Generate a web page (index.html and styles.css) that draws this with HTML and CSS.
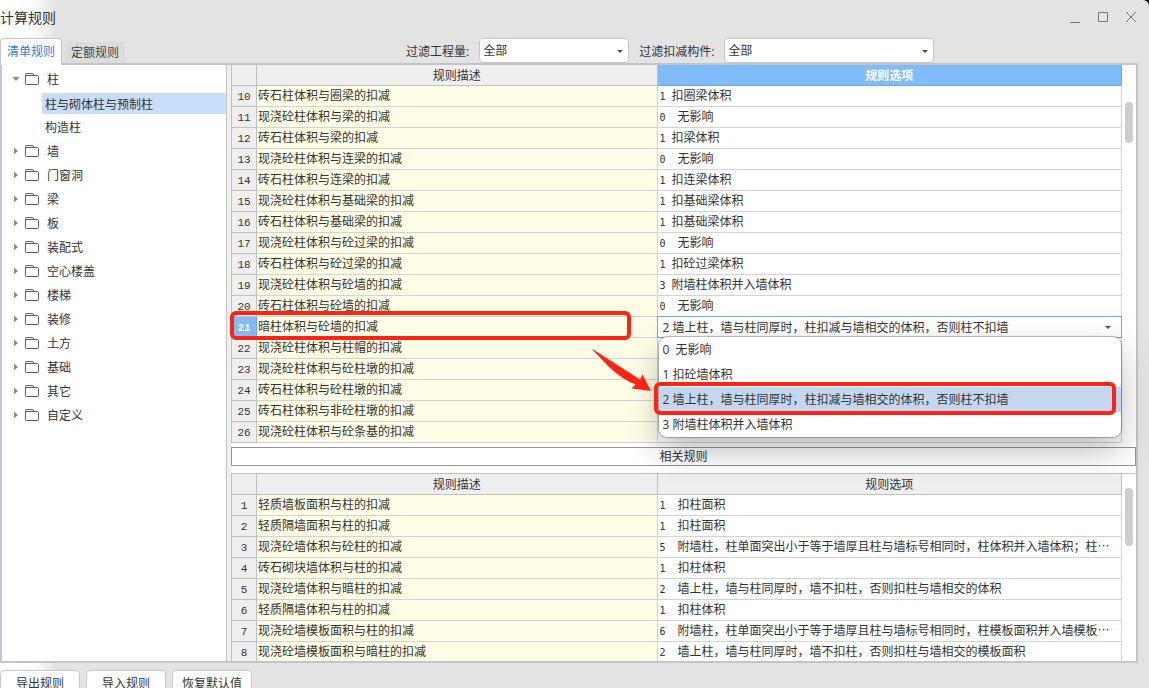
FILE: index.html
```html
<!DOCTYPE html>
<html lang="zh-CN">
<head>
<meta charset="utf-8">
<meta name="viewport" content="width=device-width, initial-scale=1">
<title>计算规则</title>
<link rel="stylesheet" href="styles.css">
</head>
<body>
<svg class="defs" aria-hidden="true">
  <symbol id="folder" viewBox="0 0 14 12"><path d="M1.5 11.5h11a1 1 0 0 0 1-1v-7a1 1 0 0 0-1-1H9L8 .5H1.5a1 1 0 0 0-1 1v9a1 1 0 0 0 1 1zM.5 2.5H9" fill="none" stroke="#555d6e"/></symbol>
  <symbol id="right" viewBox="0 0 6 8"><path d="M1 0.5v7L5 4z" fill="#8a8a8a"/></symbol>
  <symbol id="down" viewBox="0 0 8 6"><path d="M.5 1h7L4 5z" fill="#8a8a8a"/></symbol>
</svg>
<main class="window">
  <header class="titlebar">
    <h1>计算规则</h1>
    <div class="controls">
      <button type="button" aria-label="最小化"><svg width="12" height="12"><path d="M1 10.500h10" /></svg></button>
      <button type="button" aria-label="最大化"><svg width="12" height="12"><path d="M1.500 .500h9v9h-9z"/></svg></button>
      <button type="button" aria-label="关闭"><svg width="12" height="12"><path d="M1 0l10 10M11 0L1 10"/></svg></button>
    </div>
  </header>
  <div class="toolbar">
    <div class="tabs" role="tablist">
      <button type="button" class="tab active" role="tab" aria-selected="true">清单规则</button>
      <button type="button" class="tab" role="tab" aria-selected="false">定额规则</button>
    </div>
    <div class="filters">
      <label for="quantity">过滤工程量:</label>
      <span class="combo quantity"><select id="quantity"><option>全部</option></select></span>
      <label for="component">过滤扣减构件:</label>
      <span class="combo component"><select id="component"><option>全部</option></select></span>
    </div>
  </div>
  <div class="frame">
    <nav class="tree" aria-label="构件">
      <ul>
        <li class="node"><svg class="twist"><use href="#down"/></svg><svg class="folder"><use href="#folder"/></svg><span>柱</span></li>
        <li class="leaf selected">柱与砌体柱与预制柱</li>
        <li class="leaf">构造柱</li>
        <li class="node"><svg class="twist"><use href="#right"/></svg><svg class="folder"><use href="#folder"/></svg><span>墙</span></li>
        <li class="node"><svg class="twist"><use href="#right"/></svg><svg class="folder"><use href="#folder"/></svg><span>门窗洞</span></li>
        <li class="node"><svg class="twist"><use href="#right"/></svg><svg class="folder"><use href="#folder"/></svg><span>梁</span></li>
        <li class="node"><svg class="twist"><use href="#right"/></svg><svg class="folder"><use href="#folder"/></svg><span>板</span></li>
        <li class="node"><svg class="twist"><use href="#right"/></svg><svg class="folder"><use href="#folder"/></svg><span>装配式</span></li>
        <li class="node"><svg class="twist"><use href="#right"/></svg><svg class="folder"><use href="#folder"/></svg><span>空心楼盖</span></li>
        <li class="node"><svg class="twist"><use href="#right"/></svg><svg class="folder"><use href="#folder"/></svg><span>楼梯</span></li>
        <li class="node"><svg class="twist"><use href="#right"/></svg><svg class="folder"><use href="#folder"/></svg><span>装修</span></li>
        <li class="node"><svg class="twist"><use href="#right"/></svg><svg class="folder"><use href="#folder"/></svg><span>土方</span></li>
        <li class="node"><svg class="twist"><use href="#right"/></svg><svg class="folder"><use href="#folder"/></svg><span>基础</span></li>
        <li class="node"><svg class="twist"><use href="#right"/></svg><svg class="folder"><use href="#folder"/></svg><span>其它</span></li>
        <li class="node"><svg class="twist"><use href="#right"/></svg><svg class="folder"><use href="#folder"/></svg><span>自定义</span></li>
      </ul>
    </nav>
    <div class="content">
      <section class="pane upper">
        <table>
          <colgroup><col class="c-no"><col class="c-desc"><col></colgroup>
          <thead><tr><th></th><th>规则描述</th><th class="current">规则选项</th></tr></thead>
          <tbody>
            <tr><th>10</th><td>砖石柱体积与圈梁的扣减</td><td><i>1 </i>扣圈梁体积</td></tr>
            <tr><th>11</th><td>现浇砼柱体积与梁的扣减</td><td><i>0  </i>无影响</td></tr>
            <tr><th>12</th><td>砖石柱体积与梁的扣减</td><td><i>1 </i>扣梁体积</td></tr>
            <tr><th>13</th><td>现浇砼柱体积与连梁的扣减</td><td><i>0  </i>无影响</td></tr>
            <tr><th>14</th><td>砖石柱体积与连梁的扣减</td><td><i>1 </i>扣连梁体积</td></tr>
            <tr><th>15</th><td>现浇砼柱体积与基础梁的扣减</td><td><i>1 </i>扣基础梁体积</td></tr>
            <tr><th>16</th><td>砖石柱体积与基础梁的扣减</td><td><i>1 </i>扣基础梁体积</td></tr>
            <tr><th>17</th><td>现浇砼柱体积与砼过梁的扣减</td><td><i>0  </i>无影响</td></tr>
            <tr><th>18</th><td>砖石柱体积与砼过梁的扣减</td><td><i>1 </i>扣砼过梁体积</td></tr>
            <tr><th>19</th><td>现浇砼柱体积与砼墙的扣减</td><td><i>3 </i>附墙柱体积并入墙体积</td></tr>
            <tr><th>20</th><td>砖石柱体积与砼墙的扣减</td><td><i>0  </i>无影响</td></tr>
            <tr class="editing">
              <th class="current">21</th>
              <td class="marked">暗柱体积与砼墙的扣减<span class="mark row-mark"></span>
                <svg class="arrow" viewBox="0 0 60 43" aria-hidden="true"><path d="M1 .300Q2 0 3 1L49 30.500 51.500 25.500 60 42 40.500 39.500 44.500 35.500Q32 31 18 18z" fill="#ff2313"/></svg></td>
              <td class="editor">
                <span class="combo cell"><select aria-label="规则选项"><option>2 墙上柱，墙与柱同厚时，柱扣减与墙相交的体积，否则柱不扣墙</option></select></span>
                <ul class="popup" role="listbox" aria-label="规则选项">
                  <li role="option">0  无影响</li>
                  <li role="option">1 扣砼墙体积</li>
                  <li role="option" class="chosen" aria-selected="true">2 墙上柱，墙与柱同厚时，柱扣减与墙相交的体积，否则柱不扣墙<span class="mark option-mark"></span></li>
                  <li role="option">3 附墙柱体积并入墙体积</li>
                </ul>
              </td>
            </tr>
            <tr><th>22</th><td>现浇砼柱体积与柱帽的扣减</td><td></td></tr>
            <tr><th>23</th><td>现浇砼柱体积与砼柱墩的扣减</td><td></td></tr>
            <tr><th>24</th><td>砖石柱体积与砼柱墩的扣减</td><td></td></tr>
            <tr><th>25</th><td>砖石柱体积与非砼柱墩的扣减</td><td></td></tr>
            <tr><th>26</th><td>现浇砼柱体积与砼条基的扣减</td><td></td></tr>
          </tbody>
        </table>
        <div class="scroll"><div class="thumb"></div></div>
      </section>
      <h2 class="related">相关规则</h2>
      <section class="pane lower">
        <table>
          <colgroup><col class="c-no"><col class="c-desc"><col></colgroup>
          <thead><tr><th></th><th>规则描述</th><th>规则选项</th></tr></thead>
          <tbody>
            <tr><th>1</th><td>轻质墙板面积与柱的扣减</td><td><i>1  </i>扣柱面积</td></tr>
            <tr><th>2</th><td>轻质隔墙面积与柱的扣减</td><td><i>1  </i>扣柱面积</td></tr>
            <tr><th>3</th><td>现浇砼墙体积与砼柱的扣减</td><td><i>5  </i>附墙柱，柱单面突出小于等于墙厚且柱与墙标号相同时，柱体积并入墙体积；柱…</td></tr>
            <tr><th>4</th><td>砖石砌块墙体积与柱的扣减</td><td><i>1  </i>扣柱体积</td></tr>
            <tr><th>5</th><td>现浇砼墙体积与暗柱的扣减</td><td><i>2  </i>墙上柱，墙与柱同厚时，墙不扣柱，否则扣柱与墙相交的体积</td></tr>
            <tr><th>6</th><td>轻质隔墙体积与柱的扣减</td><td><i>1  </i>扣柱体积</td></tr>
            <tr><th>7</th><td>现浇砼墙模板面积与柱的扣减</td><td><i>6  </i>附墙柱，柱单面突出小于等于墙厚且柱与墙标号相同时，柱模板面积并入墙模板…</td></tr>
            <tr><th>8</th><td>现浇砼墙模板面积与暗柱的扣减</td><td><i>2  </i>墙上柱，墙与柱同厚时，墙不扣柱，否则扣柱与墙相交的模板面积</td></tr>
          </tbody>
        </table>
        <div class="scroll"><div class="thumb"></div></div>
      </section>
    </div>
  </div>
  <footer class="actions">
    <button type="button">导出规则</button>
    <button type="button">导入规则</button>
    <button type="button">恢复默认值</button>
  </footer>
</main>
</body>
</html>
```

FILE: styles.css
```css
* { box-sizing: border-box; }
html { background: #000; }
body {
  margin: 0;
  height: 100vh;
  overflow: hidden;
  color: #333;
  font: 12px/20px "Open Sans", "Noto Sans CJK SC", sans-serif;
}
button, select { font: inherit; color: inherit; margin: 0; }
ul { list-style: none; margin: 0; padding: 0; }
.defs { display: none; }

.window {
  min-height: 100vh;
  border-top-right-radius: 6px;
  background: linear-gradient(90deg, #fff 0, #fcfcfc 34px, #e3e3e3 56px);
}
.titlebar {
  display: flex;
  justify-content: space-between;
  align-items: center;
  height: 38px;
  padding: 0 10px 2px 0;
}
.titlebar h1 { margin: 0; font-size: 14px; font-weight: 400; }
.controls { display: flex; gap: 12px; }
.controls button { display: flex; padding: 2px; border: 0; background: none; }
.controls svg { fill: none; stroke: #777; }

.toolbar { display: flex; height: 25px; align-items: flex-end; }
.tabs { display: flex; align-items: flex-end; gap: 3px; }
.tab {
  width: 60px;
  height: 21px;
  padding: 0;
  border: 0;
  border-radius: 3px 3px 0 0;
  background: #dcdcdc;
  color: #444;
}
.tab.active {
  position: relative;
  z-index: 1;
  width: 62px;
  height: 27px;
  margin-bottom: -2px;
  border: 1px solid #c4c4c4;
  border-bottom: 0;
  border-radius: 4px 4px 0 0;
  background: #fff;
  color: #2b7de0;
}
.filters { display: flex; align-items: center; margin-left: 281px; }
.filters label { padding-top: 2px; }
.combo { position: relative; display: block; }
.combo::after {
  content: "";
  position: absolute;
  right: 6px;
  top: 50%;
  margin-top: -1px;
  border: 3px solid transparent;
  border-top-color: #4a4f5c;
  border-bottom: 0;
  pointer-events: none;
}
.combo select {
  appearance: none;
  display: block;
  width: 100%;
  height: 25px;
  padding: 1px 16px 0 3px;
  border: 1px solid #c8c8c8;
  border-radius: 4px;
  background: #fff;
}
.quantity { width: 150px; margin: 0 10px; }
.component { width: 210px; margin-left: 10px; }

.frame {
  display: flex;
  margin-right: 11px;
  border: 2px solid #c4c4c6;
  border-left-color: #c5c8ce;
  background: #fff;
}
.tree { flex: none; width: 225px; padding-top: 2px; border-right: 1px solid #c4c4c4; }
.tree li { display: flex; align-items: center; height: 24px; }
.node { padding-left: 10px; }
.node span { padding-top: 2px; }
.twist { width: 8px; height: 8px; }
.folder { width: 14px; height: 12px; margin: 0 8px 0 5px; }
.tree .leaf { margin-left: 40px; padding: 2px 0 0 3px; }
.tree .selected { height: 21px; margin-top: 2px; margin-bottom: 1px; background: #c9dff9; }

.content { flex: 1; min-width: 0; border-left: 4px solid #efefef; }
.pane { display: flex; }
.upper { position: relative; z-index: 1; }
.lower { overflow: hidden; border-top: 1px solid #c0c0c0; }
.lower table { margin-bottom: -2px; }
table {
  flex: 1;
  min-width: 0;
  width: 0;
  table-layout: fixed;
  border-collapse: separate;
  border-spacing: 0;
  border-left: 1px solid #c0c0c0;
}
.c-no { width: 25px; }
.c-desc { width: 45%; }
th, td {
  height: 21px;
  padding: 0 2px;
  border-right: 1px solid #d3d3d3;
  border-bottom: 1px solid #d3d3d3;
  text-align: left;
  font-weight: 400;
  line-height: 18px;
  white-space: pre;
}
th { border-color: #c0c0c0; background: #efefef; text-align: center; }
thead th { padding-top: 2px; }
tbody th { padding: 2px 0 0; font: 11px/18px "Liberation Mono", monospace; }
td { padding: 0 1px 2px; font-family: "Noto Sans CJK SC", sans-serif; }
td:nth-child(3) { padding-left: 2px; }
td:nth-child(2) { background: #fffde5; }
td i { font: 10px/12px "DejaVu Sans Mono", monospace; }
th.current { background: #80bbfa; border-color: #67a9ec; color: #fff; font-weight: 700; }
.scroll { flex: none; width: 14px; padding: 37px 3px 0; background: #fff; }
.thumb { height: 41px; border-radius: 4px; background: #cdcdcd; }
.lower .scroll { padding-top: 14px; }
.lower .thumb { height: 58px; }

.marked, .editor { position: relative; white-space: normal; }
td.editor { padding: 0; font-family: inherit; }
.cell select {
  height: 20px;
  padding-left: 5px;
  border: 0;
  border-radius: 0;
  outline: 1px solid #67a9ec;
}
.cell::after { right: 10px; }
.popup {
  position: absolute;
  z-index: 2;
  top: 20px;
  left: 1px;
  right: 0;
  border-radius: 8px;
  background: #fff;
  box-shadow: 0 0 1px 1px rgba(0,0,0,.28), 0 14px 32px rgba(0,0,0,.26);
}
.popup li { position: relative; height: 25px; padding-left: 4px; line-height: 25px; white-space: pre; }
.popup .chosen { background: #c3d8f0; }
.mark { position: absolute; border: 4px solid #ff2313; border-radius: 6px; }
.row-mark { top: -6px; left: -27px; right: 26px; height: 29px; }
.option-mark { top: -5px; left: -5px; right: 5px; height: 33px; }
.arrow { position: absolute; z-index: 3; top: 32px; right: 6px; width: 60px; height: 43px; }

.related {
  margin: 4px 0 7px;
  padding: 1px 0 0;
  border: 1px solid #959595;
  font-size: 12px;
  font-weight: 400;
  line-height: 16px;
  text-align: center;
  background: #fff;
}
.actions { display: flex; gap: 6px; padding-top: 7px; }
.actions button {
  width: 80px;
  height: 28px;
  padding: 0;
  border: 1px solid #c8c8c8;
  border-radius: 4px;
  background: #fff;
}
```
